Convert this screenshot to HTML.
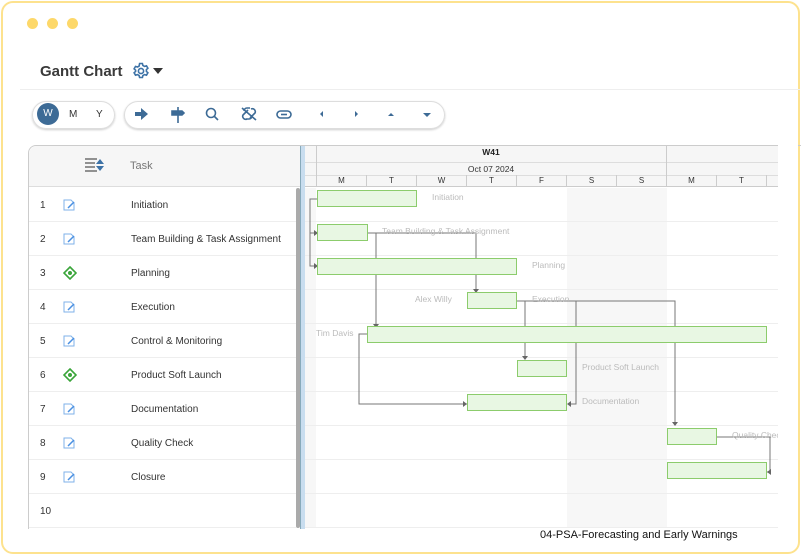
<!DOCTYPE html>
<html><head><meta charset="utf-8"><style>
*{margin:0;padding:0;box-sizing:border-box}
body{width:801px;height:555px;background:#fff;font-family:"Liberation Sans",sans-serif;position:relative;overflow:hidden}
.card{position:absolute;left:1px;top:1px;width:799px;height:553px;border:2px solid #fde28e;border-radius:12px}
.dot{position:absolute;top:18px;width:11px;height:11px;border-radius:50%;background:#fdd86a}
.abs{position:absolute}
.row{position:absolute;left:29px;width:267px;height:34px;border-bottom:1px solid #eee;font-size:10px;color:#333}
.row .n{position:absolute;left:11px;top:12px}
.row .t{position:absolute;left:102px;top:12px}
.row svg{position:absolute;left:34px;top:11px}
.bar{position:absolute;height:17px;background:#e8f7e3;border:1.5px solid #8ccc6c}
.lbl{position:absolute;font-size:8.5px;color:#bbb}
.day{position:absolute;top:175px;height:12px;width:50px;border-left:1px solid #ccc;font-size:8px;text-align:center;line-height:12px;color:#333}
.hl{position:absolute;left:305px;width:473px;height:1px;background:#eee}
</style></head><body>
<div class="card"></div>
<div class="dot" style="left:27px"></div><div class="dot" style="left:47px"></div><div class="dot" style="left:67px"></div>
<div class="abs" style="left:40px;top:63px;font-size:15px;font-weight:bold;color:#3a3a3a">Gantt Chart</div>
<svg class="abs" style="left:132px;top:62px" width="34" height="18" viewBox="0 0 34 18"><g fill="none" stroke="#3d72a6" stroke-width="1.6"><circle cx="9" cy="9" r="2.6"/><path d="M7.6 1.5h2.8l.5 2 1.6.9 2-.6 1.4 2.4-1.5 1.4v1.8l1.5 1.4-1.4 2.4-2-.6-1.6.9-.5 2H7.6l-.5-2-1.6-.9-2 .6-1.4-2.4 1.5-1.4V8.2L2.1 6.8l1.4-2.4 2 .6 1.6-.9z"/></g><path d="M21 6h10l-5 6z" fill="#333"/></svg>
<div class="abs" style="left:20px;top:89px;width:780px;height:1px;background:#eee"></div>
<div class="abs" style="left:32px;top:101px;width:83px;height:28px;border:1px solid #ddd;border-radius:14px;box-shadow:0 1px 2px #ccc"></div>
<div class="abs" style="left:37px;top:103px;width:22px;height:22px;border-radius:50%;background:#3d6b96;color:#fff;font-size:10px;text-align:center;line-height:22px">W</div>
<div class="abs" style="left:69px;top:109px;font-size:10px;color:#333">M</div>
<div class="abs" style="left:96px;top:109px;font-size:10px;color:#333">Y</div>
<div class="abs" style="left:124px;top:101px;width:321px;height:28px;border:1px solid #ddd;border-radius:14px;box-shadow:0 1px 2px #ccc"></div>
<svg class="abs" style="left:124px;top:101px" width="321" height="28" viewBox="0 0 321 28"><g fill="#3d6b96" stroke="#3d6b96">
<path d="M11 11h6v-4l7 6-7 6v-4h-6z" stroke="none"/>
<path d="M54 6v16M48 10h10l2 2-2 2H48z" stroke-width="1.6"/>
<g fill="none" stroke-width="1.6"><circle cx="87" cy="12" r="4.5"/><path d="M90 15l4 4"/></g>
<g fill="none" stroke-width="1.6"><path d="M120 10a3 3 0 0 1 3-3h3M128 15a3 3 0 0 1-3 3h-3M124 9l-5 5a3 3 0 0 0 4 4M126 17l5-5a3 3 0 0 0-4-4M118 7l14 12"/></g>
<g fill="none" stroke-width="1.6"><rect x="153" y="10" width="14" height="7" rx="3.5"/><path d="M157 13.5h6"/></g>
<path d="M199 10v6l-3-3z" stroke="none"/><path d="M231 10v6l3-3z" stroke="none"/>
<path d="M264 15h6l-3-3z" stroke="none"/><path d="M299 12h8l-4 4z" stroke="none"/>
</g></svg>
<div class="abs" style="left:28px;top:145px;width:780px;height:384px;border:1px solid #ccc;border-radius:8px 0 0 0;border-right:none;border-bottom:none"></div>
<div class="abs" style="left:29px;top:146px;width:271px;height:41px;background:#f6f6f6;border-bottom:1px solid #ddd;border-radius:8px 0 0 0"></div>
<svg class="abs" style="left:85px;top:158px" width="20" height="14"><g stroke="#555" stroke-width="1.3"><path d="M0 1h12M0 5h10M0 9h10M0 13h12"/></g><path d="M15 1l4 5h-8zM15 13l4-5h-8z" fill="#3d72a6"/></svg>
<div class="abs" style="left:130px;top:160px;font-size:11px;color:#777">Task</div>
<div class="abs" style="left:296px;top:188px;width:4px;height:340px;background:#aaa;border-radius:2px"></div>
<div class="abs" style="left:300px;top:146px;width:5px;height:383px;background:#c8ddef;border-left:1px solid #8ab"></div>
<div class="abs" style="left:305px;top:146px;width:473px;height:41px;background:#f6f6f6;border-bottom:1px solid #ccc"></div>
<div class="abs" style="left:305px;top:162px;width:473px;height:1px;background:#ddd"></div>
<div class="abs" style="left:305px;top:175px;width:473px;height:1px;background:#ddd"></div>
<div class="abs" style="left:316px;top:146px;width:1px;height:41px;background:#ccc"></div>
<div class="abs" style="left:666px;top:146px;width:1px;height:41px;background:#ccc"></div>
<div class="abs" style="left:316px;top:147px;width:350px;text-align:center;font-size:8.5px;font-weight:bold;color:#222">W41</div>
<div class="abs" style="left:316px;top:164px;width:350px;text-align:center;font-size:8.5px;color:#333">Oct 07 2024</div>
<div class="day" style="left:316px">M</div><div class="day" style="left:366px">T</div><div class="day" style="left:416px">W</div><div class="day" style="left:466px">T</div><div class="day" style="left:516px">F</div><div class="day" style="left:566px">S</div><div class="day" style="left:616px">S</div><div class="day" style="left:666px">M</div><div class="day" style="left:716px">T</div><div class="day" style="left:766px"></div>
<div class="abs" style="left:305px;top:188px;width:11px;height:340px;background:#f7f7f7"></div>
<div class="abs" style="left:567px;top:188px;width:100px;height:340px;background:#f7f7f7"></div>
<div class="hl" style="top:221px"></div><div class="hl" style="top:255px"></div><div class="hl" style="top:289px"></div><div class="hl" style="top:323px"></div><div class="hl" style="top:357px"></div><div class="hl" style="top:391px"></div><div class="hl" style="top:425px"></div><div class="hl" style="top:459px"></div><div class="hl" style="top:493px"></div><div class="hl" style="top:527px"></div>
<div class="row" style="top:188px"><span class="n">1</span><svg width="14" height="12"><path d="M1 1h7l3 3v7H1z" fill="none" stroke="#7fb2ea"/><path d="M5 9l6-6" stroke="#4a90e2" stroke-width="1.5"/></svg><span class="t">Initiation</span></div>
<div class="row" style="top:222px"><span class="n">2</span><svg width="14" height="12"><path d="M1 1h7l3 3v7H1z" fill="none" stroke="#7fb2ea"/><path d="M5 9l6-6" stroke="#4a90e2" stroke-width="1.5"/></svg><span class="t">Team Building &amp; Task Assignment</span></div>
<div class="row" style="top:256px"><span class="n">3</span><svg width="14" height="14" style="top:10px"><path d="M7 1l6 6-6 6-6-6z" fill="none" stroke="#3aa53a" stroke-width="1.6"/><circle cx="7" cy="7" r="2" fill="#3aa53a"/></svg><span class="t">Planning</span></div>
<div class="row" style="top:290px"><span class="n">4</span><svg width="14" height="12"><path d="M1 1h7l3 3v7H1z" fill="none" stroke="#7fb2ea"/><path d="M5 9l6-6" stroke="#4a90e2" stroke-width="1.5"/></svg><span class="t">Execution</span></div>
<div class="row" style="top:324px"><span class="n">5</span><svg width="14" height="12"><path d="M1 1h7l3 3v7H1z" fill="none" stroke="#7fb2ea"/><path d="M5 9l6-6" stroke="#4a90e2" stroke-width="1.5"/></svg><span class="t">Control &amp; Monitoring</span></div>
<div class="row" style="top:358px"><span class="n">6</span><svg width="14" height="14" style="top:10px"><path d="M7 1l6 6-6 6-6-6z" fill="none" stroke="#3aa53a" stroke-width="1.6"/><circle cx="7" cy="7" r="2" fill="#3aa53a"/></svg><span class="t">Product Soft Launch</span></div>
<div class="row" style="top:392px"><span class="n">7</span><svg width="14" height="12"><path d="M1 1h7l3 3v7H1z" fill="none" stroke="#7fb2ea"/><path d="M5 9l6-6" stroke="#4a90e2" stroke-width="1.5"/></svg><span class="t">Documentation</span></div>
<div class="row" style="top:426px"><span class="n">8</span><svg width="14" height="12"><path d="M1 1h7l3 3v7H1z" fill="none" stroke="#7fb2ea"/><path d="M5 9l6-6" stroke="#4a90e2" stroke-width="1.5"/></svg><span class="t">Quality Check</span></div>
<div class="row" style="top:460px"><span class="n">9</span><svg width="14" height="12"><path d="M1 1h7l3 3v7H1z" fill="none" stroke="#7fb2ea"/><path d="M5 9l6-6" stroke="#4a90e2" stroke-width="1.5"/></svg><span class="t">Closure</span></div>
<div class="row" style="top:494px"><span class="n">10</span></div>
<svg class="abs" style="left:0;top:0" width="801" height="555"><g fill="none" stroke="#777" stroke-width="1">
<path d="M318 199h-8v67h8M310 233h8"/>
<path d="M367 233h9v92M376 233h100v57"/>
<path d="M517 301h158v124M525 301v57"/>
<path d="M576 301v103h-7"/>
<path d="M367 334h-8v70h108"/>
<path d="M717 437h53v35h-3"/>
</g><g fill="#666">
<path d="M373 324h6l-3 4z"/><path d="M473 289h6l-3 4z"/><path d="M522 356h6l-3 4z"/><path d="M672 422h6l-3 4z"/>
<path d="M314 230v6l4-3zM314 263v6l4-3z"/><path d="M463 401v6l4-3z"/><path d="M571 401v6l-4-3z"/><path d="M771 469v6l-4-3z"/>
</g></svg>
<div class="bar" style="left:317px;top:190px;width:100px"></div>
<div class="bar" style="left:317px;top:224px;width:51px"></div>
<div class="bar" style="left:317px;top:258px;width:200px"></div>
<div class="bar" style="left:467px;top:292px;width:50px"></div>
<div class="bar" style="left:367px;top:326px;width:400px"></div>
<div class="bar" style="left:517px;top:360px;width:50px"></div>
<div class="bar" style="left:467px;top:394px;width:100px"></div>
<div class="bar" style="left:667px;top:428px;width:50px"></div>
<div class="bar" style="left:667px;top:462px;width:100px"></div>
<div class="lbl" style="left:432px;top:192px">Initiation</div>
<div class="lbl" style="left:382px;top:226px">Team Building &amp; Task Assignment</div>
<div class="lbl" style="left:532px;top:260px">Planning</div>
<div class="lbl" style="left:415px;top:294px">Alex Willy</div>
<div class="lbl" style="left:532px;top:294px">Execution</div>
<div class="lbl" style="left:316px;top:328px">Tim Davis</div>
<div class="lbl" style="left:582px;top:362px">Product Soft Launch</div>
<div class="lbl" style="left:582px;top:396px">Documentation</div>
<div class="lbl" style="left:732px;top:430px;width:46px;overflow:hidden;white-space:nowrap">Quality Check</div>
<div class="abs" style="left:778px;top:140px;width:20px;height:400px;background:#fff"></div>
<div class="abs" style="left:540px;top:529px;font-size:11px;color:#111">04-PSA-Forecasting and Early Warnings</div>
</body></html>
